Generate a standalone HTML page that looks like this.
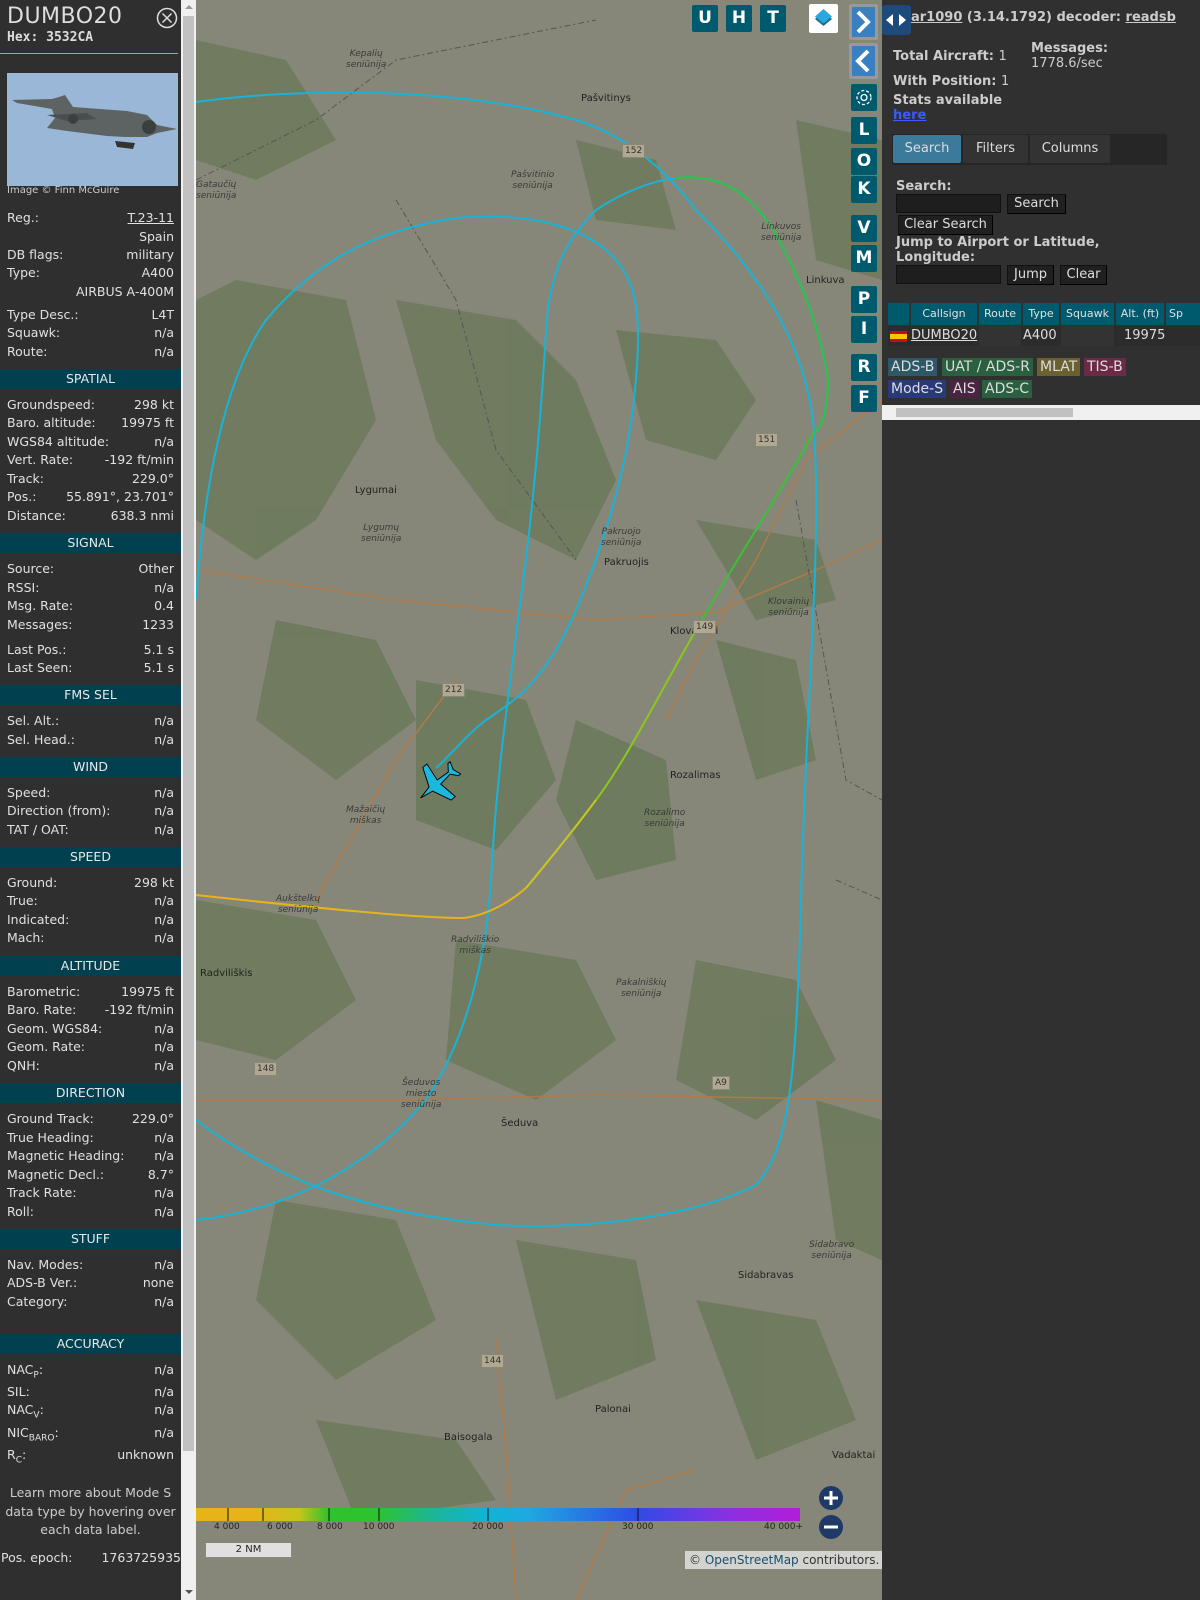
<!DOCTYPE html>
<html><head><meta charset="utf-8"><style>
*{box-sizing:border-box;margin:0;padding:0}
body{width:1200px;height:1600px;overflow:hidden;background:#8a8b7e;font-family:"DejaVu Sans","Liberation Sans",sans-serif;position:relative}
#left{position:absolute;left:0;top:0;width:181px;height:1600px;background:#2f2f2f;color:#e0e0e0;font-size:12.5px}
#sb{position:absolute;left:181px;top:0;width:15px;height:1600px;background:#f0f0f0}
#sb .th{position:absolute;left:2px;top:16px;width:11px;height:1435px;background:#c1c1c1}
.r{position:absolute;left:7px;width:167px;height:18px;line-height:18px;white-space:nowrap}
.r b{font-weight:normal;position:absolute;right:0;top:0}
.h{position:absolute;left:0;width:181px;height:20px;line-height:20px;background:#00404f;color:#e8e8e8;text-align:center;font-size:12.5px}
#map{position:absolute;left:196px;top:0;width:686px;height:1600px;overflow:hidden;background:#868779}
.mb{position:absolute;width:26px;height:27px;background:#005a6e;color:#fff;font-weight:bold;font-size:17px;text-align:center;line-height:27px;border-radius:2px;font-family:"DejaVu Sans",sans-serif}
#right{position:absolute;left:882px;top:0;width:318px;height:1600px;background:#303030;color:#ccc;font-size:13px}
.bt{position:absolute;background:#202020;border:1px solid #111;border-right-color:#000;border-bottom-color:#000;color:#ddd;font-size:13px;height:20px;line-height:18px;text-align:center}
.inp{position:absolute;background:#1e1e1e;border:1px solid #111;height:19px}
.bd{position:absolute;height:18px;line-height:18px;font-size:14px;padding:0 3px;color:#ddd}
.ml{position:absolute;font-size:10px;color:#222}
.mi{position:absolute;font-size:9px;color:#3a3a3a;font-style:italic;text-align:center;line-height:11px}
.rs{position:absolute;font-size:9px;color:#333;background:#b0a890;border:1px solid #887;padding:0 2px;line-height:12px}
</style></head><body>
<div id="left">
<div style="position:absolute;left:7px;top:4px;font-size:22px;color:#ddd;letter-spacing:0.5px">DUMBO20</div>
<div style="position:absolute;left:7px;top:30px;font-size:13px;font-weight:bold;font-family:'DejaVu Sans Mono',monospace;color:#ddd">Hex: 3532CA</div>
<svg style="position:absolute;left:156px;top:7px" width="22" height="22"><circle cx="11" cy="11" r="9.5" fill="none" stroke="#ddd" stroke-width="1.5"/><path d="M6.5 6.5L15.5 15.5M15.5 6.5L6.5 15.5" stroke="#ddd" stroke-width="1.5"/></svg>
<div style="position:absolute;left:0;top:53px;width:178px;height:1px;background:#8aa9c8"></div>
<div style="position:absolute;left:7px;top:73px;width:171px;height:113px;background:#9bb7d8">
<svg width="171" height="113"><path d="M5 27L45 26L52 24L58 22L66 34L120 38L140 42L150 52L170 56L150 60L140 64L118 64L100 63L60 58L40 55L48 45L45 36L10 30Z" fill="#5d6263"/><path d="M40 42L80 40L90 46L60 48Z" fill="#4a4e50"/><circle cx="142" cy="54" r="7" fill="#3c3f40"/><circle cx="66" cy="46" r="5" fill="#3c3f40"/><path d="M108 68L128 70L126 76L110 74Z" fill="#333"/></svg></div>
<div style="position:absolute;left:7px;top:185px;font-size:10px;color:#ccc">Image © Finn McGuire</div>
<div class="r" style="top:209px">Reg.:<b style="text-decoration:underline">T.23-11</b></div>
<div class="r" style="top:228px"><b>Spain</b></div>
<div class="r" style="top:246px">DB flags:<b>military</b></div>
<div class="r" style="top:264px">Type:<b>A400</b></div>
<div class="r" style="top:283px"><b>AIRBUS A-400M</b></div>
<div class="r" style="top:306px">Type Desc.:<b>L4T</b></div>
<div class="r" style="top:324px">Squawk:<b>n/a</b></div>
<div class="r" style="top:343px">Route:<b>n/a</b></div>
<div class="h" style="top:369px">SPATIAL</div>
<div class="r" style="top:396px">Groundspeed:<b>298 kt</b></div>
<div class="r" style="top:414px">Baro. altitude:<b>19975 ft</b></div>
<div class="r" style="top:433px">WGS84 altitude:<b>n/a</b></div>
<div class="r" style="top:451px">Vert. Rate:<b>-192 ft/min</b></div>
<div class="r" style="top:470px">Track:<b>229.0°</b></div>
<div class="r" style="top:488px">Pos.:<b>55.891°, 23.701°</b></div>
<div class="r" style="top:507px">Distance:<b>638.3 nmi</b></div>
<div class="h" style="top:533px">SIGNAL</div>
<div class="r" style="top:560px">Source:<b>Other</b></div>
<div class="r" style="top:579px">RSSI:<b>n/a</b></div>
<div class="r" style="top:597px">Msg. Rate:<b>0.4</b></div>
<div class="r" style="top:616px">Messages:<b>1233</b></div>
<div class="r" style="top:641px">Last Pos.:<b>5.1 s</b></div>
<div class="r" style="top:659px">Last Seen:<b>5.1 s</b></div>
<div class="h" style="top:685px">FMS SEL</div>
<div class="r" style="top:712px">Sel. Alt.:<b>n/a</b></div>
<div class="r" style="top:731px">Sel. Head.:<b>n/a</b></div>
<div class="h" style="top:757px">WIND</div>
<div class="r" style="top:784px">Speed:<b>n/a</b></div>
<div class="r" style="top:802px">Direction (from):<b>n/a</b></div>
<div class="r" style="top:821px">TAT / OAT:<b>n/a</b></div>
<div class="h" style="top:847px">SPEED</div>
<div class="r" style="top:874px">Ground:<b>298 kt</b></div>
<div class="r" style="top:892px">True:<b>n/a</b></div>
<div class="r" style="top:911px">Indicated:<b>n/a</b></div>
<div class="r" style="top:929px">Mach:<b>n/a</b></div>
<div class="h" style="top:956px">ALTITUDE</div>
<div class="r" style="top:983px">Barometric:<b>19975 ft</b></div>
<div class="r" style="top:1001px">Baro. Rate:<b>-192 ft/min</b></div>
<div class="r" style="top:1020px">Geom. WGS84:<b>n/a</b></div>
<div class="r" style="top:1038px">Geom. Rate:<b>n/a</b></div>
<div class="r" style="top:1057px">QNH:<b>n/a</b></div>
<div class="h" style="top:1083px">DIRECTION</div>
<div class="r" style="top:1110px">Ground Track:<b>229.0°</b></div>
<div class="r" style="top:1129px">True Heading:<b>n/a</b></div>
<div class="r" style="top:1147px">Magnetic Heading:<b>n/a</b></div>
<div class="r" style="top:1166px">Magnetic Decl.:<b>8.7°</b></div>
<div class="r" style="top:1184px">Track Rate:<b>n/a</b></div>
<div class="r" style="top:1203px">Roll:<b>n/a</b></div>
<div class="h" style="top:1229px">STUFF</div>
<div class="r" style="top:1256px">Nav. Modes:<b>n/a</b></div>
<div class="r" style="top:1274px">ADS-B Ver.:<b>none</b></div>
<div class="r" style="top:1293px">Category:<b>n/a</b></div>
<div class="h" style="top:1334px">ACCURACY</div>
<div class="r" style="top:1361px">NAC<sub style="font-size:9px">P</sub>:<b>n/a</b></div>
<div class="r" style="top:1383px">SIL:<b>n/a</b></div>
<div class="r" style="top:1401px">NAC<sub style="font-size:9px">V</sub>:<b>n/a</b></div>
<div class="r" style="top:1424px">NIC<sub style="font-size:9px">BARO</sub>:<b>n/a</b></div>
<div class="r" style="top:1446px">R<sub style="font-size:9px">C</sub>:<b>unknown</b></div>
<div style="position:absolute;left:0;top:1484px;width:181px;text-align:center;line-height:18.5px;color:#ccc">Learn more about Mode S data type by hovering over each data label.</div>
<div class="r" style="top:1549px;left:1px;width:180px">Pos. epoch:<b>1763725935</b></div>
</div>
<div id="sb"><div class="th"></div><div style="position:absolute;left:4px;top:5px;border:4px solid transparent;border-bottom:4px solid #999;border-top:0"></div><div style="position:absolute;left:4px;top:1590px;border:4px solid transparent;border-top:4px solid #555;border-bottom:0"></div></div>

<div id="map">
<svg width="686" height="1600" style="position:absolute;left:0;top:0">
<g fill="#6c795a" opacity="0.85">
<path d="M0 40L90 60L140 140L60 180L0 160Z"/>
<path d="M40 280L150 300L180 420L120 520L60 560L0 520L0 300Z"/>
<path d="M200 300L320 320L380 380L420 480L380 560L300 520L240 440Z"/>
<path d="M420 330L520 340L560 400L520 460L450 440Z"/>
<path d="M500 520L620 540L640 600L560 620Z"/>
<path d="M80 620L180 640L220 720L140 780L60 720Z"/>
<path d="M220 680L330 700L360 780L300 850L220 820Z"/>
<path d="M380 720L470 760L480 860L400 880L360 800Z"/>
<path d="M520 640L600 660L620 760L560 780Z"/>
<path d="M0 900L120 920L160 1000L80 1060L0 1040Z"/>
<path d="M260 940L380 960L420 1040L340 1100L250 1060Z"/>
<path d="M500 960L600 980L640 1060L560 1120L480 1080Z"/>
<path d="M80 1200L200 1220L240 1320L140 1380L60 1300Z"/>
<path d="M320 1240L440 1260L460 1360L360 1400Z"/>
<path d="M500 1300L620 1320L660 1420L560 1460Z"/>
<path d="M120 1420L260 1440L300 1500L160 1520Z"/>
<path d="M600 120L686 140L686 280L620 260Z"/>
<path d="M380 140L460 160L480 230L400 220Z"/>
<path d="M620 1100L686 1120L686 1260L640 1240Z"/>
</g>
<g fill="none" stroke="#b07a48" stroke-width="1.5">
<path d="M0 570L200 600L400 620L520 612L620 570L686 540"/>
<path d="M686 400L610 460L560 560L500 660L470 720"/>
<path d="M0 1100L200 1100L400 1095L686 1100"/>
<path d="M300 1340L310 1450L320 1600"/>
<path d="M260 680L200 760L120 900"/>
<path d="M380 1600L430 1490L500 1470"/>
</g>
<g fill="none" stroke="#555" stroke-width="1" stroke-dasharray="6 3 2 3">
<path d="M0 180L120 120L200 60L300 40L400 20"/>
<path d="M200 200L260 300L300 450L380 560"/>
<path d="M600 500L650 780L686 800"/>
<path d="M640 880L686 900"/>
</g>
<g fill="none" stroke-width="2">
<path stroke="#18b4d8" d="M0 102C100 88 260 86 380 120C430 135 470 170 500 210C560 270 610 340 618 430C626 550 610 700 605 900C600 1100 590 1150 560 1185C500 1215 400 1230 300 1225C200 1215 100 1195 0 1120"/>
<path stroke="#18b4d8" d="M0 1220C90 1210 170 1170 230 1100C270 1040 290 960 295 880C300 780 312 700 322 620C336 520 345 420 350 330C354 270 370 240 400 210C430 190 460 180 480 178"/>
<path stroke="#18b4d8" d="M0 600C10 460 35 370 70 320C120 260 180 230 260 218C330 212 390 225 420 260C445 290 445 330 438 400C430 470 410 540 380 610C350 680 320 700 290 720C270 735 255 755 240 768"/>
<path stroke="#22c84a" d="M480 178C530 172 560 200 580 235C605 280 625 330 632 380C632 410 625 430 618 432"/>
<path stroke="#3cc038" d="M618 432C580 500 540 560 500 630"/>
<path stroke="#8ac81e" d="M500 630C460 700 430 760 400 800"/>
<path stroke="#c8c81e" d="M400 800C370 840 345 870 330 888"/>
<path stroke="#e6b41a" d="M330 888C310 905 290 915 268 918C220 918 120 908 0 895"/>
</g>
<g transform="translate(243,782) rotate(229) scale(1.35)">
<path d="M0 -18L2 -8L16 -2L16 2L2 0L1 10L6 14L6 16L0 14L-6 16L-6 14L-1 10L-2 0L-16 2L-16 -2L-2 -8Z" fill="#1ab8dc" stroke="#000" stroke-width="0.7"/>
</g>
</svg>
<div class="ml" style="left:385px;top:93px">Pašvitinys</div>
<div class="ml" style="left:159px;top:485px">Lygumai</div>
<div class="ml" style="left:408px;top:557px">Pakruojis</div>
<div class="ml" style="left:474px;top:626px">Klovainiai</div>
<div class="ml" style="left:474px;top:770px">Rozalimas</div>
<div class="ml" style="left:4px;top:968px">Radviliškis</div>
<div class="ml" style="left:305px;top:1118px">Šeduva</div>
<div class="ml" style="left:542px;top:1270px">Sidabravas</div>
<div class="ml" style="left:610px;top:275px">Linkuva</div>
<div class="ml" style="left:399px;top:1404px">Palonai</div>
<div class="ml" style="left:248px;top:1432px">Baisogala</div>
<div class="ml" style="left:636px;top:1450px">Vadaktai</div>
<div class="mi" style="left:150px;top:49px">Kepalių<br>seniūnija</div>
<div class="mi" style="left:0px;top:180px">Gataučių<br>seniūnija</div>
<div class="mi" style="left:315px;top:170px">Pašvitinio<br>seniūnija</div>
<div class="mi" style="left:565px;top:222px">Linkuvos<br>seniūnija</div>
<div class="mi" style="left:165px;top:523px">Lygumų<br>seniūnija</div>
<div class="mi" style="left:405px;top:527px">Pakruojo<br>seniūnija</div>
<div class="mi" style="left:572px;top:597px">Klovainių<br>seniūnija</div>
<div class="mi" style="left:448px;top:808px">Rozalimo<br>seniūnija</div>
<div class="mi" style="left:150px;top:805px">Mažaičių<br>miškas</div>
<div class="mi" style="left:80px;top:894px">Aukštelkų<br>seniūnija</div>
<div class="mi" style="left:255px;top:935px">Radviliškio<br>miškas</div>
<div class="mi" style="left:420px;top:978px">Pakalniškių<br>seniūnija</div>
<div class="mi" style="left:205px;top:1078px">Šeduvos<br>miesto<br>seniūnija</div>
<div class="mi" style="left:613px;top:1240px">Sidabravo<br>seniūnija</div>
<div class="rs" style="left:426px;top:144px">152</div>
<div class="rs" style="left:559px;top:433px">151</div>
<div class="rs" style="left:497px;top:620px">149</div>
<div class="rs" style="left:246px;top:683px">212</div>
<div class="rs" style="left:58px;top:1062px">148</div>
<div class="rs" style="left:516px;top:1076px">A9</div>
<div class="rs" style="left:285px;top:1354px">144</div>
<div class="mb" style="left:496px;top:5px">U</div>
<div class="mb" style="left:530px;top:5px">H</div>
<div class="mb" style="left:564px;top:5px">T</div>
<div style="position:absolute;left:613px;top:4px;width:29px;height:29px;background:#fff;border-radius:2px"><svg width="29" height="29"><path d="M14.5 7L23 15L14.5 22L6 15Z" fill="#1e6f84"/><path d="M14.5 5L23 12.5L14.5 19.5L6 12.5Z" fill="#29a8e0"/></svg></div>
<div style="position:absolute;left:653px;top:4px;width:29px;height:36px;background:#999;border-radius:2px"><div style="position:absolute;left:3px;top:3px;width:23px;height:30px;background:#3a7fc0"></div><svg style="position:absolute;left:0;top:0" width="29" height="36"><path d="M9 8L19 18L9 28" fill="none" stroke="#fff" stroke-width="4"/></svg></div>
<div style="position:absolute;left:653px;top:43px;width:29px;height:36px;background:#999;border-radius:2px"><div style="position:absolute;left:3px;top:3px;width:23px;height:30px;background:#3a7fc0"></div><svg style="position:absolute;left:0;top:0" width="29" height="36"><path d="M19 8L9 18L19 28" fill="none" stroke="#fff" stroke-width="4"/></svg></div>
<div class="mb" style="left:655px;top:84px"><svg width="26" height="27"><circle cx="13" cy="13.5" r="3" fill="none" stroke="#fff" stroke-width="1.3"/><circle cx="13" cy="13.5" r="7" fill="none" stroke="#fff" stroke-width="1.3" stroke-dasharray="3 2"/></svg></div>
<div class="mb" style="left:655px;top:117px">L</div>
<div class="mb" style="left:655px;top:148px">O</div>
<div class="mb" style="left:655px;top:176px">K</div>
<div class="mb" style="left:655px;top:215px">V</div>
<div class="mb" style="left:655px;top:245px">M</div>
<div class="mb" style="left:655px;top:286px">P</div>
<div class="mb" style="left:655px;top:316px">I</div>
<div class="mb" style="left:655px;top:354px">R</div>
<div class="mb" style="left:655px;top:385px">F</div>
<div style="position:absolute;left:0;top:1508px;width:604px;height:13px;background:linear-gradient(90deg,#e6b41a 0%,#e6b41a 10%,#c8c41c 17%,#2ec22e 22%,#2ec22e 30%,#1cb4a0 40%,#10b4d4 48%,#20a8e0 55%,#2e4ce6 73%,#8a30e0 88%,#b01ed8 100%)"></div>
<svg width="604" height="14" style="position:absolute;left:0;top:1508px"><g stroke="#111" stroke-width="1"><path d="M32 0V13M67 0V13M133 0V13M183 0V13M292 0V13M442 0V13"/></g></svg>
<div style="position:absolute;top:1522px;left:0;width:620px;height:12px;font-size:9px;color:#222">
<span style="position:absolute;left:18px">4 000</span><span style="position:absolute;left:71px">6 000</span><span style="position:absolute;left:121px">8 000</span><span style="position:absolute;left:167px">10 000</span><span style="position:absolute;left:276px">20 000</span><span style="position:absolute;left:426px">30 000</span><span style="position:absolute;left:568px">40 000+</span></div>
<div style="position:absolute;left:9px;top:1543px;width:87px;height:15px;background:rgba(240,240,240,0.85);border:1px solid #888;border-top:0;font-size:10px;text-align:center;line-height:14px;color:#222">2 NM</div>
<svg width="26" height="60" style="position:absolute;left:622px;top:1485px"><circle cx="13" cy="13" r="12" fill="#1f3a66"/><circle cx="13" cy="42" r="12" fill="#1f3a66"/><path d="M6 13H20M13 6V20M6 42H20" stroke="#fff" stroke-width="3"/></svg>
<div style="position:absolute;left:489px;top:1551px;width:197px;height:18px;background:rgba(230,230,230,0.8);font-size:12px;color:#333;line-height:18px;padding-left:4px;white-space:nowrap">© <span style="color:#1a4e6e">OpenStreetMap</span> contributors.</div>
</div>

<div id="right">
<div style="position:absolute;left:0;top:5px;width:29px;height:30px;background:#1d4a7a;border-radius:3px"><svg width="29" height="30"><path d="M4 15L11 9V21Z M24 15L17 9V21Z" fill="#fff"/></svg></div>
<div style="position:absolute;left:29px;top:10px;font-weight:bold;font-size:13px;color:#ccc;white-space:nowrap"><u>ar1090</u> (3.14.1792) decoder: <u>readsb</u></div>
<div style="position:absolute;left:11px;top:49px;font-weight:bold">Total Aircraft: <span style="font-weight:normal">1</span></div>
<div style="position:absolute;left:149px;top:41px;font-weight:bold">Messages:</div>
<div style="position:absolute;left:149px;top:56px">1778.6/sec</div>
<div style="position:absolute;left:11px;top:74px;font-weight:bold">With Position: <span style="font-weight:normal">1</span></div>
<div style="position:absolute;left:11px;top:93px;font-weight:bold">Stats available</div>
<div style="position:absolute;left:11px;top:108px;font-weight:bold;color:#3a5cff;text-decoration:underline">here</div>
<div style="position:absolute;left:10px;top:134px;width:275px;height:31px;background:#262626"></div>
<div style="position:absolute;left:11px;top:135px;width:68px;height:28px;background:#3b7a9a;border-radius:2px;text-align:center;line-height:28px;color:#ddd">Search</div>
<div style="position:absolute;left:81px;top:135px;width:65px;height:28px;background:#333;text-align:center;line-height:28px;color:#ddd">Filters</div>
<div style="position:absolute;left:148px;top:135px;width:80px;height:28px;background:#333;text-align:center;line-height:28px;color:#ddd">Columns</div>
<div style="position:absolute;left:14px;top:179px;font-weight:bold">Search:</div>
<div class="inp" style="left:14px;top:194px;width:105px"></div>
<div class="bt" style="left:125px;top:194px;width:59px">Search</div>
<div class="bt" style="left:16px;top:215px;width:95px">Clear Search</div>
<div style="position:absolute;left:14px;top:235px;font-weight:bold;line-height:15px">Jump to Airport or Latitude,<br>Longitude:</div>
<div class="inp" style="left:14px;top:265px;width:105px"></div>
<div class="bt" style="left:125px;top:265px;width:47px">Jump</div>
<div class="bt" style="left:178px;top:265px;width:47px">Clear</div>
<div style="position:absolute;left:6px;top:303px;width:312px;height:22px;font-size:11px;color:#e0e0e0;line-height:22px">
<div style="position:absolute;left:0;width:21px;height:22px;background:#005a6e"></div>
<div style="position:absolute;left:23px;width:66px;height:22px;background:#005a6e;text-align:center">Callsign</div>
<div style="position:absolute;left:91px;width:42px;height:22px;background:#005a6e;text-align:center">Route</div>
<div style="position:absolute;left:135px;width:36px;height:22px;background:#005a6e;text-align:center">Type</div>
<div style="position:absolute;left:173px;width:53px;height:22px;background:#005a6e;text-align:center">Squawk</div>
<div style="position:absolute;left:228px;width:48px;height:22px;background:#005a6e;text-align:center">Alt. (ft)</div>
<div style="position:absolute;left:278px;width:40px;height:22px;background:#005a6e;padding-left:3px">Sp</div>
</div>
<div style="position:absolute;left:6px;top:326px;width:312px;height:20px;font-size:13px;color:#ddd;line-height:20px;background:#2c2c2c">
<div style="position:absolute;left:2px;top:5px;width:17px;height:11px;background:#c60b1e"><div style="position:absolute;top:3px;width:17px;height:5px;background:#ffc400"></div></div>
<div style="position:absolute;left:23px;text-decoration:underline">DUMBO20</div>
<div style="position:absolute;left:91px;width:42px;height:20px;background:#333"></div>
<div style="position:absolute;left:135px">A400</div>
<div style="position:absolute;left:173px;width:53px;height:20px;background:#333"></div>
<div style="position:absolute;left:236px">19975</div>
</div>
<div class="bd" style="left:6px;top:358px;background:#2c5868">ADS-B</div>
<div class="bd" style="left:60px;top:358px;background:#2a6040">UAT / ADS-R</div>
<div class="bd" style="left:155px;top:358px;background:#6a6030">MLAT</div>
<div class="bd" style="left:202px;top:358px;background:#6a2a48">TIS-B</div>
<div class="bd" style="left:6px;top:380px;background:#2a3a78">Mode-S</div>
<div class="bd" style="left:68px;top:380px;background:#4a2440">AIS</div>
<div class="bd" style="left:100px;top:380px;background:#2a6040">ADS-C</div>
<div style="position:absolute;left:0;top:405px;width:318px;height:15px;background:#f0f0f0"><div style="position:absolute;left:14px;top:3px;width:177px;height:9px;background:#c1c1c1"></div></div>
</div>
</body></html>
